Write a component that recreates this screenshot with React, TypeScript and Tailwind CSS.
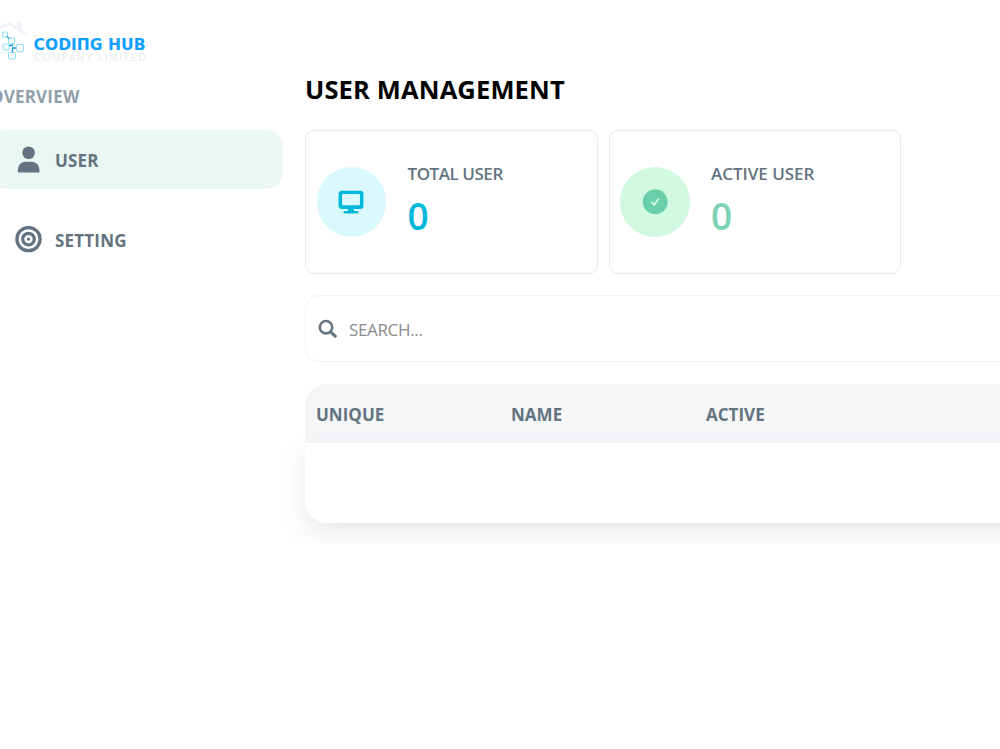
import { type ReactNode } from "react";

export default function App() {
  return (
    <div className="flex h-[749px] w-[1000px] overflow-hidden bg-white font-['Open_Sans','Noto_Sans',sans-serif] text-[#637381]">
      <Sidebar />
      <main className="w-[717px] shrink-0 overflow-hidden pt-[71px] pl-[22px]">
        <h1 className="h-[59px] text-[25.5px] leading-[36px] font-bold tracking-[0.15px] whitespace-nowrap text-black">USER MANAGEMENT</h1>
        <div className="flex gap-[11px]">
          <StatCard
            label="TOTAL USER"
            value={0}
            icon={<MonitorIcon />}
            circleClass="bg-[#d9f9ff]"
            labelClass="tracking-[-0.45px]"
            valueClass="text-[#00b8d9]"
          />
          <StatCard
            label="ACTIVE USER"
            value={0}
            icon={<CheckBadgeIcon />}
            circleClass="bg-[#d1f8e1]"
            labelClass="tracking-[-0.02px]"
            valueClass="text-[#7dd3b5]"
          />
        </div>
        <div className="mt-[21px] flex h-[67px] w-[760px] items-center rounded-[14px] border border-[#f1f2f3] pl-3">
          <SearchIcon />
          <input className="ml-[11px] w-80 pt-[3px] text-[17px] tracking-[-0.35px] outline-none placeholder:text-[#8b8b8b]" placeholder="SEARCH..." />
        </div>
        <UserTable />
      </main>
    </div>
  );
}

function Sidebar() {
  return (
    <aside className="w-[283px] shrink-0 pt-[18px]">
      <Logo />
      <div className="-ml-[10px] h-[62px] pt-[17px] text-[17px] leading-6 font-bold tracking-[0.2px] text-[#919eab]">OVERVIEW</div>
      <nav className="-ml-[11px] flex flex-col gap-[21px]">
        <NavItem label="USER" icon={<PersonIcon />} active />
        <NavItem label="SETTING" icon={<TargetIcon />} />
      </nav>
    </aside>
  );
}

function NavItem({ label, icon, active = false }: { label: string; icon: ReactNode; active?: boolean }) {
  return (
    <a className={`flex h-[59px] items-center gap-[13px] rounded-[17px] pl-[26px] text-[17px] font-bold tracking-[0.2px] ${active ? "bg-[#eaf7f3]" : ""}`}>
      {icon}
      <span className="pt-[2px]">{label}</span>
    </a>
  );
}

function StatCard({
  label,
  value,
  icon,
  circleClass,
  labelClass,
  valueClass
}: {
  label: string;
  value: number;
  icon: ReactNode;
  circleClass: string;
  labelClass: string;
  valueClass: string;
}) {
  return (
    <section className="flex h-36 w-[292.5px] shrink-0 items-center rounded-[9px] border border-[#e9eaeb] pl-[10.5px]">
      <div className={`flex h-[69.5px] w-[69.5px] items-center justify-center rounded-full ${circleClass}`}>{icon}</div>
      <div className="ml-[21.5px]">
        <div className={`text-[17px] leading-6 font-semibold ${labelClass}`}>{label}</div>
        <div className={`mt-[5px] h-[52px] text-[37px] leading-[50px] font-semibold ${valueClass}`}>{value}</div>
      </div>
    </section>
  );
}

function UserTable() {
  return (
    <div className="mt-[22px] -ml-[22px] h-40 w-[780px] overflow-hidden pl-[22px]">
      <div className="flex h-[59px] items-center rounded-tl-[22px] bg-[#f4f6f8] pl-[11px] text-[17px] font-bold tracking-[0.02px]">
        {["UNIQUE", "NAME", "ACTIVE"].map((column) => (
          <div key={column} className="w-[195px] pt-[2px]">{column}</div>
        ))}
      </div>
      <div className="h-20 rounded-bl-[22px] bg-white shadow-[0_11px_25px_rgba(99,115,129,0.15)]" />
    </div>
  );
}

function Logo() {
  return (
    <svg className="h-[50px] w-[160px]" viewBox="0 0 160 50">
      <g fill="none" stroke="#f0f2f8" strokeWidth="2.5">
        <path d="M-2 10 10 5.5 27 17M18 11V5h2v8" />
        <path d="M0 34.5H24" strokeWidth="1" />
      </g>
      <g fill="#f7fdff" stroke="#8bdcf4" strokeWidth="1">
        <rect x="2.5" y="14" width="5" height="5" rx="1" />
        <rect x="8.5" y="20" width="6" height="6" rx="1" />
        <rect x="3" y="26" width="6" height="6" rx="1" />
        <rect x="16.5" y="26.5" width="7" height="7" rx="1" />
        <rect x="8.5" y="34.5" width="7" height="6.5" rx="1" />
      </g>
      <path d="M7 18.5 9 20.5M9 27.5h3.5V26M12.5 34v-4H16" fill="none" stroke="#169ce0" strokeWidth="1.3" />
      <text x="33.5" y="31.5" textLength="112" lengthAdjust="spacingAndGlyphs" className="fill-[#12a0ff] font-['DejaVu_Sans',sans-serif] text-[15px] font-bold">CODIПG HUB</text>
      <text x="34" y="43" textLength="112" className="fill-[#e9ebf1] font-['Liberation_Sans',sans-serif] text-[10px]">COMPANY LIMITED</text>
    </svg>
  );
}

function PersonIcon() {
  return (
    <svg className="h-[27px] w-[27px]" viewBox="0 0 27 27" fill="currentColor">
      <circle cx="13.6" cy="6.8" r="6.3" />
      <path d="M2.7 25.2C2.7 19.5 6 15.8 10.5 15.8h6.2c4.5 0 7.8 3.7 7.8 9.4 0 .8-.5 1.3-1.3 1.3H4c-.8 0-1.3-.5-1.3-1.3Z" />
    </svg>
  );
}

function TargetIcon() {
  return (
    <svg className="h-[27px] w-[27px]" viewBox="0 0 27 27" fill="none" stroke="currentColor">
      <circle cx="13.5" cy="13.1" r="11.6" strokeWidth="3.3" />
      <circle cx="13.5" cy="13.1" r="5.8" strokeWidth="3.2" />
      <circle cx="13.5" cy="13.1" r="1.7" fill="currentColor" stroke="none" />
    </svg>
  );
}

function MonitorIcon() {
  return (
    <svg className="h-[26px] w-[26px]" viewBox="0 0 26 26">
      <path d="M3.6 1.8h18.8a3 3 0 0 1 3 3v12.2a3 3 0 0 1-3 3h-6.7l.4 2.1h3.3a1.2 1.2 0 0 1 0 2.4H6.6a1.2 1.2 0 0 1 0-2.4h3.3l.4-2.1H3.6a3 3 0 0 1-3-3V4.8a3 3 0 0 1 3-3Z" fill="#00b8d9" />
      <rect x="4" y="5.1" width="18" height="11.2" rx="1.2" fill="#d9f9ff" />
    </svg>
  );
}

function CheckBadgeIcon() {
  return (
    <svg className="h-[26px] w-[26px]" viewBox="0 0 26 26">
      <circle cx="13.2" cy="12.7" r="12.4" fill="#68cfaa" />
      <path d="m9.9 13.4 2.2 2.6 4.2-6.1" fill="none" stroke="#d1f8e1" strokeWidth="1.8" strokeLinecap="round" strokeLinejoin="round" />
    </svg>
  );
}

function SearchIcon() {
  return (
    <svg className="h-5 w-5" viewBox="0 0 20 20" fill="none" stroke="currentColor" strokeWidth="2.6">
      <circle cx="8" cy="8.2" r="6.2" />
      <path d="m12.4 12.7 5.8 5.5" strokeWidth="3" />
    </svg>
  );
}
